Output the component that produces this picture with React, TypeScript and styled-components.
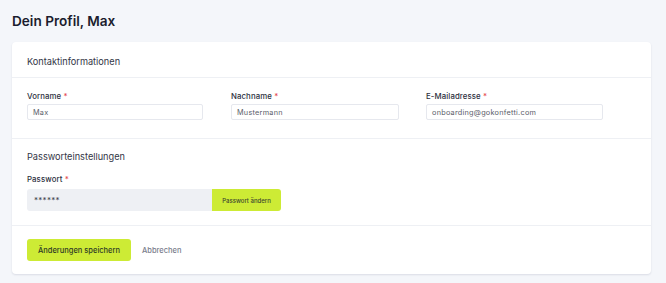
import React from 'react';
import styled, { createGlobalStyle } from 'styled-components';

const GlobalStyle = createGlobalStyle`
    body {
        margin: 0;
        background-color: #f4f6fa;
        font-family: Inter, "Noto Sans", sans-serif;
        color: #1f2233;
    }
`;

const Page = styled.div`
    width: 666px;
    height: 283px;
    padding: 13px 15px 0 12px;
    box-sizing: border-box;
`;

const Title = styled.h1`
    margin: 0 0 12px 0;
    font-size: 13.6px;
    font-weight: 600;
    line-height: 17px;
    color: #1b1d2e;
`;

const Card = styled.div`
    background-color: #fff;
    border-radius: 4px;
    box-shadow: 0 1px 2px rgba(30, 40, 80, 0.12);
    width: 639px;
`;

const Section = styled.div<{ $last?: boolean }>`
    padding: 0 15px;
    border-bottom: ${p => (p.$last ? 'none' : '1px solid #eef0f4')};
`;

const SectionTitle = styled.div<{ $top: number; $bottom: number }>`
    font-size: 9.2px;
    font-weight: 400;
    color: #333646;
    line-height: 12px;
    padding-top: ${p => p.$top}px;
    padding-bottom: ${p => p.$bottom}px;
`;

const FieldRow = styled.div`
    display: flex;
    padding: 14px 0 18px 0;
`;

const Field = styled.div<{ $w: number; $gap: number }>`
    width: ${p => p.$w}px;
    margin-right: ${p => p.$gap}px;
    display: flex;
    flex-direction: column;
`;

const Label = styled.label<{ $mb: number }>`
    display: block;
    font-size: 7.8px;
    font-weight: 500;
    color: #2c2f40;
    margin-bottom: ${p => p.$mb}px;
    line-height: 9px;
    letter-spacing: 0.1px;

    span {
        color: #e5484d;
    }
`;

const Input = styled.div`
    height: 16px;
    border: 1px solid #e6e8ee;
    border-radius: 2px;
    box-sizing: border-box;
    font-size: 7.3px;
    color: #5a5d6a;
    display: flex;
    align-items: center;
    padding-left: 5px;
    letter-spacing: 0.25px;
`;

const PwRow = styled.div`
    display: flex;
    width: 254px;
    height: 22px;
    margin-bottom: 14px;
`;

const PwInput = styled.div`
    flex: 1;
    background-color: #eef0f4;
    border-radius: 3px 0 0 3px;
    font-size: 8px;
    color: #3c3f4c;
    display: flex;
    align-items: center;
    padding-left: 7px;
    letter-spacing: 0.3px;
`;

const PwButton = styled.button`
    width: 69px;
    border: none;
    background-color: #cdeb35;
    border-radius: 0 3px 3px 0;
    font-family: inherit;
    font-size: 6px;
    font-weight: 500;
    color: #3b4630;
    padding: 0;
`;

const Actions = styled.div`
    display: flex;
    align-items: center;
    padding: 13px 15px 13px 15px;
    gap: 11px;
`;

const SaveButton = styled.button`
    height: 22px;
    width: 104px;
    border: none;
    border-radius: 3px;
    background-color: #cdeb35;
    font-family: inherit;
    font-size: 7.5px;
    font-weight: 500;
    color: #2f3a26;
    padding: 0;
`;

const CancelButton = styled.button`
    border: none;
    background: none;
    font-family: inherit;
    font-size: 7.5px;
    font-weight: 500;
    color: #7a7d8c;
    padding: 0;
`;

const App = () => {
    return (
        <>
            <GlobalStyle />
            <Page>
                <Title>Dein Profil, Max</Title>
                <Card>
                    <Section>
                        <SectionTitle $top={14} $bottom={9}>Kontaktinformationen</SectionTitle>
                    </Section>
                    <Section>
                        <FieldRow>
                            <Field $w={176} $gap={28}>
                                <Label $mb={3}>Vorname <span>*</span></Label>
                                <Input>Max</Input>
                            </Field>
                            <Field $w={168} $gap={27}>
                                <Label $mb={3}>Nachname <span>*</span></Label>
                                <Input>Mustermann</Input>
                            </Field>
                            <Field $w={177} $gap={0}>
                                <Label $mb={3}>E-Mailadresse <span>*</span></Label>
                                <Input>onboarding@gokonfetti.com</Input>
                            </Field>
                        </FieldRow>
                    </Section>
                    <Section>
                        <SectionTitle $top={12} $bottom={12}>Passworteinstellungen</SectionTitle>
                        <Label $mb={5}>Passwort <span>*</span></Label>
                        <PwRow>
                            <PwInput>******</PwInput>
                            <PwButton>Passwort ändern</PwButton>
                        </PwRow>
                    </Section>
                    <Actions>
                        <SaveButton>Änderungen speichern</SaveButton>
                        <CancelButton>Abbrechen</CancelButton>
                    </Actions>
                </Card>
            </Page>
        </>
    );
}

export default App;
